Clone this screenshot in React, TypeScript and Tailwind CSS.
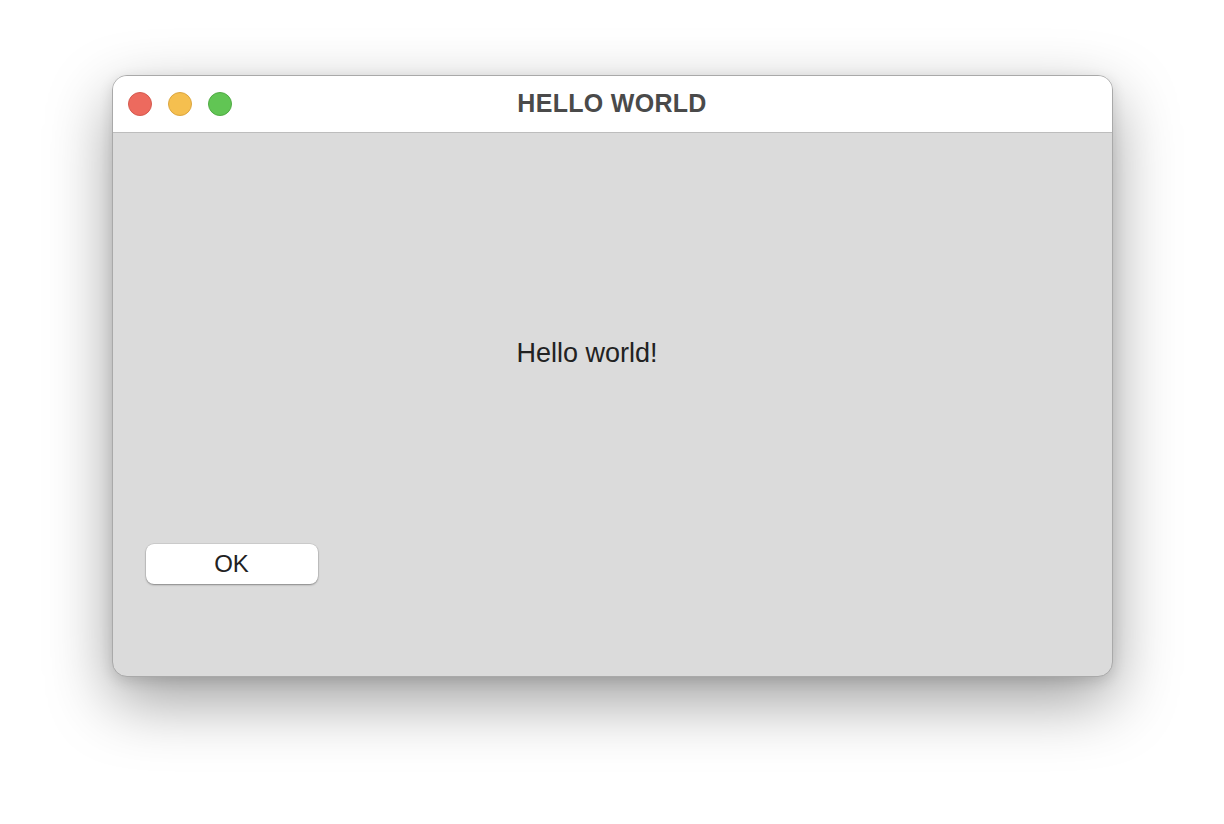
import React from 'react';

function TrafficLight({ fill, ring }: { fill: string; ring: string }) {
  return <span className={`block h-6 w-6 rounded-full border ${fill} ${ring}`} />;
}

export default function App() {
  return (
    <div className="min-h-[824px] w-full bg-white pt-[75px] font-['Liberation_Sans',Arial,sans-serif]">
      <div className="mx-auto flex h-[602px] w-[1001px] flex-col overflow-hidden rounded-[15px] border border-[#a9a9a9] bg-[#dbdbdb] shadow-[0_24px_64px_rgba(0,0,0,0.38),0_4px_14px_rgba(0,0,0,0.12)]">
        {/* title bar */}
        <div className="relative flex h-[57px] shrink-0 items-center border-b border-[#bdbdbd] bg-white pl-[15px]">
          <div className="flex items-center gap-4">
            <TrafficLight fill="bg-[#ed6a5e]" ring="border-[#d55a4f]" />
            <TrafficLight fill="bg-[#f5bf4f]" ring="border-[#dca640]" />
            <TrafficLight fill="bg-[#61c554]" ring="border-[#50ab44]" />
          </div>
          <div className="pointer-events-none absolute inset-0 flex items-center justify-center text-[25px] font-bold tracking-[0.3px] text-[#4a4a4a]">
            HELLO WORLD
          </div>
        </div>

        {/* content */}
        <div className="flex flex-1 flex-col pt-[205px]">
          <p className="ml-[404px] text-[27px] leading-[30px] text-[#222]">Hello world!</p>
          <button className="ml-[33px] mt-[176px] flex h-10 w-[172px] items-center justify-center rounded-[8px] bg-white text-[24px] text-[#222] shadow-[0_1px_2px_rgba(0,0,0,0.35),0_0_0_0.5px_rgba(0,0,0,0.12)]">
            OK
          </button>
        </div>
      </div>
    </div>
  );
}
